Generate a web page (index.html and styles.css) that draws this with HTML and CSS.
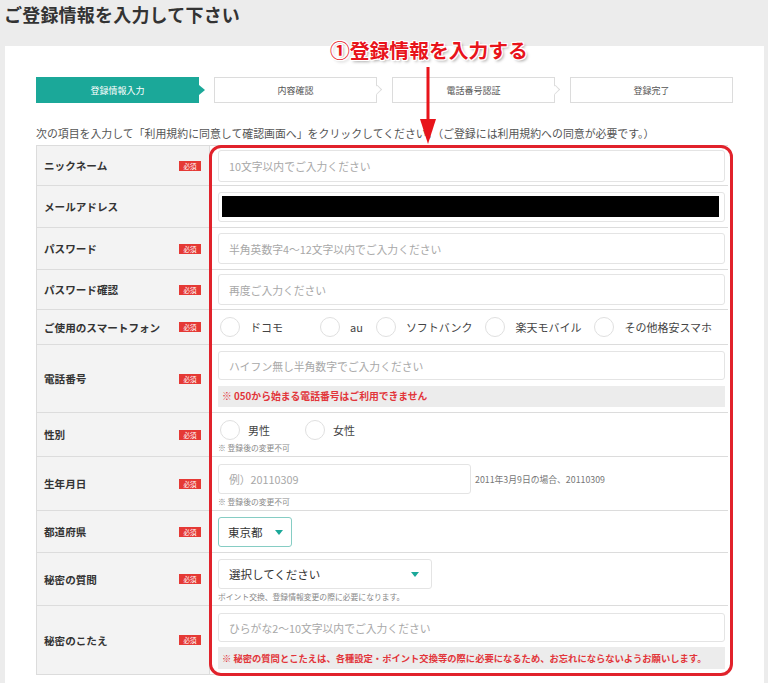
FILE: index.html
```html
<!DOCTYPE html>
<html lang="ja">
<head>
<meta charset="utf-8">
<title>ご登録情報を入力して下さい</title>
<link rel="stylesheet" href="styles.css">
</head>
<body>
<div class="page">
  <header class="page-head"><h1 class="title">ご登録情報を入力して下さい</h1></header>
  <main class="card">
    <ol class="steps">
      <li class="step is-current">登録情報入力</li>
      <li class="step">内容確認</li>
      <li class="step">電話番号認証</li>
      <li class="step is-last">登録完了</li>
    </ol>
    <p class="lead">次の項目を入力して「利用規約に同意して確認画面へ」をクリックしてください。（ご登録には利用規約への同意が必要です。）</p>

    <div class="form">
      <div class="row h-41">
        <div class="label"><span>ニックネーム</span><em class="req">必須</em></div>
        <div class="field center"><input class="input h-32" type="text" placeholder="10文字以内でご入力ください"></div>
      </div>
      <div class="row h-42">
        <div class="label"><span>メールアドレス</span></div>
        <div class="field center"><div class="input h-30 filled"><div class="redact"></div></div></div>
      </div>
      <div class="row h-42">
        <div class="label"><span>パスワード</span><em class="req">必須</em></div>
        <div class="field center"><input class="input h-31" type="text" placeholder="半角英数字4～12文字以内でご入力ください"></div>
      </div>
      <div class="row h-41">
        <div class="label"><span>パスワード確認</span><em class="req">必須</em></div>
        <div class="field center"><input class="input h-31" type="text" placeholder="再度ご入力ください"></div>
      </div>
      <div class="row h-35">
        <div class="label"><span>ご使用のスマートフォン</span><em class="req">必須</em></div>
        <div class="field center">
          <div class="radios phone-radios">
            <label class="radio wide"><span class="dot"></span>ドコモ</label>
            <label class="radio"><span class="dot"></span>au</label>
            <label class="radio"><span class="dot"></span>ソフトバンク</label>
            <label class="radio"><span class="dot"></span>楽天モバイル</label>
            <label class="radio"><span class="dot"></span>その他格安スマホ</label>
          </div>
        </div>
      </div>
      <div class="row h-68">
        <div class="label"><span>電話番号</span><em class="req">必須</em></div>
        <div class="field top pt-6">
          <input class="input h-29" type="text" placeholder="ハイフン無し半角数字でご入力ください">
          <p class="warn">※ 050から始まる電話番号はご利用できません</p>
        </div>
      </div>
      <div class="row h-44">
        <div class="label"><span>性別</span><em class="req">必須</em></div>
        <div class="field top pt-7">
          <div class="radios sex-radios">
            <label class="radio wide"><span class="dot"></span>男性</label>
            <label class="radio"><span class="dot"></span>女性</label>
          </div>
          <p class="note">※ 登録後の変更不可</p>
        </div>
      </div>
      <div class="row h-54">
        <div class="label"><span>生年月日</span><em class="req">必須</em></div>
        <div class="field top pt-7">
          <div class="inline">
            <input class="input h-30 w-birth" type="text" placeholder="例）20110309">
            <span class="hint">2011年3月9日の場合、20110309</span>
          </div>
          <p class="note">※ 登録後の変更不可</p>
        </div>
      </div>
      <div class="row h-42">
        <div class="label"><span>都道府県</span><em class="req">必須</em></div>
        <div class="field center">
          <div class="select pref">東京都<span class="caret"></span></div>
        </div>
      </div>
      <div class="row h-53">
        <div class="label"><span>秘密の質問</span><em class="req">必須</em></div>
        <div class="field top pt-6">
          <div class="select question">選択してください<span class="caret"></span></div>
          <p class="note">ポイント交換、登録情報変更の際に必要になります。</p>
        </div>
      </div>
      <div class="row h-69">
        <div class="label"><span>秘密のこたえ</span><em class="req">必須</em></div>
        <div class="field top pt-7">
          <input class="input h-29" type="text" placeholder="ひらがな2～10文字以内でご入力ください">
          <p class="warn tall">※ 秘密の質問とこたえは、各種設定・ポイント交換等の際に必要になるため、お忘れにならないようお願いします。</p>
        </div>
      </div>
      <div class="highlight"></div>
    </div>
  </main>

  <div class="callout">①登録情報を入力する</div>
  <svg class="arrow" width="20" height="80" viewBox="0 0 20 80" aria-hidden="true">
    <rect x="8.5" y="0" width="3" height="56" fill="#e8141b"/>
    <polygon points="2,52 18,52 10,77" fill="#e8141b"/>
  </svg>
</div>
</body>
</html>
```

FILE: styles.css
```css
html, body {
  margin: 0;
  padding: 0;
}
body {
  background: #ececec;
  font-family: "Noto Sans CJK JP", "Noto Sans", sans-serif;
  color: #333;
  width: 768px;
  height: 683px;
  overflow: hidden;
}
.page {
  position: relative;
  width: 768px;
}
.page-head {
  height: 46px;
  box-sizing: border-box;
  padding: 2px 0 0 4px;
}
.title {
  margin: 0;
  font-size: 18px;
  line-height: 24px;
  font-weight: 700;
  color: #333;
  letter-spacing: 0.2px;
}
.card {
  display: block;
  margin-left: 5px;
  width: 759px;
  min-height: 637px;
  background: #fff;
  box-sizing: border-box;
  padding: 31px 0 0 31px;
}

/* steps */
.steps {
  display: flex;
  gap: 15px;
  margin: 0;
  padding: 0;
  list-style: none;
  width: 697px;
}
.step {
  position: relative;
  width: 163px;
  height: 26px;
  box-sizing: border-box;
  border: 1px solid #dcdcdc;
  background: #fff;
  font-size: 9px;
  color: #555;
  display: flex;
  align-items: center;
  justify-content: center;
}
.step.is-current {
  background: #1ba899;
  border-color: #1ba899;
  color: #fff;
}
.step.is-current::after {
  content: "";
  position: absolute;
  right: -7px;
  top: 50%;
  margin-top: -5px;
  border-left: 6px solid #1ba899;
  border-top: 5px solid transparent;
  border-bottom: 5px solid transparent;
}
.step:not(.is-current):not(.is-last)::after {
  content: "";
  position: absolute;
  right: -5px;
  top: 50%;
  width: 7px;
  height: 7px;
  margin-top: -4px;
  background: #fff;
  border-top: 1px solid #dcdcdc;
  border-right: 1px solid #dcdcdc;
  transform: rotate(45deg) scaleX(0.8);
}

.lead {
  margin: 23px 0 5px;
  font-size: 10.9px;
  line-height: 14px;
  color: #555;
  white-space: nowrap;
}

/* form table */
.form {
  position: relative;
  width: 692px;
  border-top: 1px solid #dcdcdc;
  border-left: 1px solid #dcdcdc;
  box-sizing: border-box;
}
.row {
  display: grid;
  grid-template-columns: 173px 1fr;
  border-bottom: 1px solid #dcdcdc;
  box-sizing: border-box;
}
.h-35 { height: 35px; }
.h-41 { height: 40px; }
.h-42 { height: 42px; }
.h-44 { height: 44px; }
.h-53 { height: 53px; }
.h-54 { height: 54px; }
.h-68 { height: 68px; }
.h-69 { height: 69px; }

.label {
  background: #f3f3f3;
  border-right: 1px solid #dcdcdc;
  display: flex;
  align-items: center;
  justify-content: space-between;
  padding: 0 8px 0 7px;
  font-size: 10.6px;
  font-weight: 700;
  color: #333;
}
.req {
  font-style: normal;
  font-weight: 400;
  width: 22px;
  height: 10px;
  line-height: 10px;
  font-size: 6.5px;
  text-align: center;
  color: #fff;
  background: #e53935;
}
.field {
  display: flex;
  flex-direction: column;
  padding: 0 3px 0 8px;
  box-sizing: border-box;
  background: #fff;
}
.field.center { justify-content: center; }
.field.top { justify-content: flex-start; }
.pt-6 { padding-top: 6px; }
.pt-7 { padding-top: 7px; }

.input {
  display: block;
  width: 100%;
  box-sizing: border-box;
  border: 1px solid #e4e4e4;
  border-radius: 3px;
  background: #fff;
  padding: 0 10px;
  margin: 0;
  font-family: inherit;
  font-size: 10.8px;
  color: #333;
  outline: none;
}
.input::placeholder { color: #a8a8a8; }
.h-29 { height: 29px; }
.h-30 { height: 30px; }
.h-31 { height: 31px; }
.h-32 { height: 32px; }
.w-birth { width: 253px; flex: none; }
.filled {
  padding: 3px 5px 4px 3px;
}
.redact {
  width: 100%;
  height: 100%;
  background: #000;
}

.warn {
  margin: 6px 0 0;
  height: 21px;
  line-height: 21px;
  background: #ececec;
  padding-left: 4px;
  font-size: 9.8px;
  font-weight: 700;
  color: #e2353a;
  white-space: nowrap;
}
.warn.tall {
  margin-top: 5px;
  height: 22px;
  line-height: 22px;
  font-size: 9.3px;
}
.note {
  margin: 3px 0 0;
  font-size: 7.8px;
  line-height: 10px;
  color: #888;
  white-space: nowrap;
}

.radios {
  display: flex;
  align-items: center;
  padding-left: 2px;
}
.radio {
  display: flex;
  align-items: center;
  font-size: 11px;
  color: #444;
  margin-right: 13px;
  white-space: nowrap;
}
.phone-radios .radio.wide { margin-right: 37px; }
.radio .dot {
  width: 20px;
  height: 20px;
  box-sizing: border-box;
  border: 1px solid #e0e0e0;
  border-radius: 50%;
  margin-right: 10px;
  background: #fff;
}
.sex-radios .radio .dot { margin-right: 8px; }
.sex-radios .radio.wide { margin-right: 35px; }

.inline {
  display: flex;
  align-items: center;
}
.hint {
  margin-left: 4px;
  font-size: 8.8px;
  color: #777;
  white-space: nowrap;
}

.select {
  position: relative;
  box-sizing: border-box;
  height: 30px;
  border: 1px solid #e4e4e4;
  border-radius: 3px;
  display: flex;
  align-items: center;
  padding-left: 9px;
  font-size: 11.5px;
  color: #333;
}
.select.pref {
  width: 74px;
  border-color: #86cdc4;
}
.select.question {
  width: 214px;
  padding-left: 10px;
}
.caret {
  position: absolute;
  top: 50%;
  margin-top: -2px;
  border-top: 5px solid #1ba899;
  border-left: 4px solid transparent;
  border-right: 4px solid transparent;
}
.pref .caret { right: 8px; }
.question .caret { right: 12px; }

/* annotation overlay */
.highlight {
  position: absolute;
  left: 172px;
  top: -1px;
  width: 524px;
  height: 531px;
  box-sizing: border-box;
  border: 3px solid #e1222b;
  border-radius: 12px;
  pointer-events: none;
}
.callout {
  position: absolute;
  left: 330px;
  top: 37px;
  font-size: 19.8px;
  line-height: 26px;
  font-weight: 700;
  color: #e8141b;
  white-space: nowrap;
  text-shadow:
    1px 0 0 #fff, -1px 0 0 #fff, 0 1px 0 #fff, 0 -1px 0 #fff,
    1px 1px 0 #fff, -1px -1px 0 #fff, 1px -1px 0 #fff, -1px 1px 0 #fff,
    2px 2px 3px rgba(0, 0, 0, 0.35);
}
.arrow {
  position: absolute;
  left: 418px;
  top: 67px;
}
```
